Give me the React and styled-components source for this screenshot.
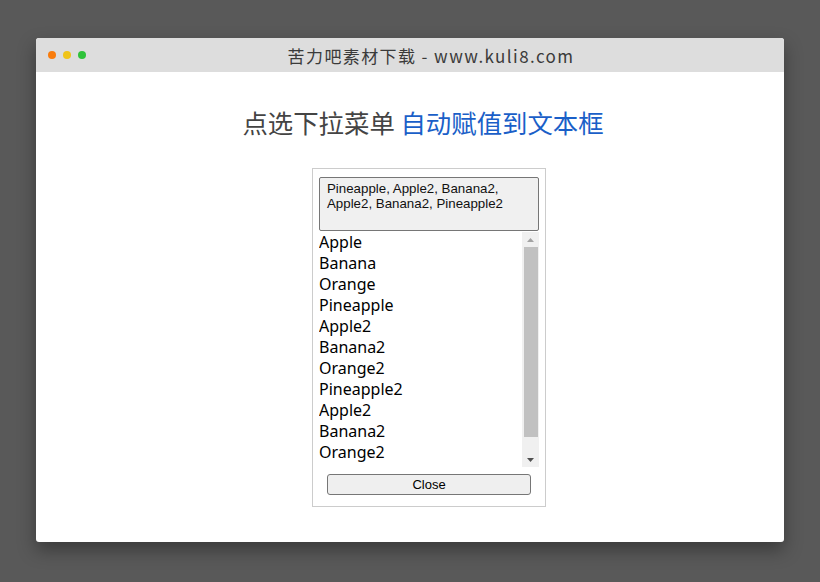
import React, { useState } from 'react'
import styled, { createGlobalStyle } from 'styled-components'

const GlobalStyle = createGlobalStyle`
  html, body {
    margin: 0;
    padding: 0;
    background: #595959;
  }
`

const Page = styled.div`
  width: 820px;
  height: 582px;
  padding: 38px 36px 0;
  box-sizing: border-box;
  background: #595959;
`

const Window = styled.div`
  width: 748px;
  height: 504px;
  background: #fff;
  border-radius: 3px;
  overflow: hidden;
  box-shadow: 0 8px 18px rgba(0, 0, 0, 0.35);
  display: flex;
  flex-direction: column;
`

const TitleBar = styled.div`
  height: 34px;
  flex: none;
  background: #dddddd;
  display: flex;
  align-items: center;
`

const Dots = styled.div`
  display: flex;
  gap: 7px;
  padding-left: 12px;
`

const Dot = styled.span`
  width: 8px;
  height: 8px;
  border-radius: 50%;
  background: ${p => p.color};
`

const TitleText = styled.div`
  flex: 1;
  text-align: center;
  padding-right: 8px;
  font-family: "Noto Sans CJK SC", "Noto Sans", sans-serif;
  font-size: 17px;
  color: #3a3a3a;
  letter-spacing: 1.4px;
`

const Content = styled.div`
  flex: 1;
  display: flex;
  flex-direction: column;
  align-items: center;
  padding: 35px 0 0 38px;
`

const Heading = styled.h1`
  margin: 0 12px 0 0;
  font-family: "Noto Sans CJK SC", "Noto Sans", sans-serif;
  font-weight: normal;
  font-size: 25.4px;
  line-height: 30px;
  color: #444;
`

const Blue = styled.span`
  color: #1a5fc8;
`

const Panel = styled.div`
  margin-top: 31px;
  width: 234px;
  height: 339px;
  box-sizing: border-box;
  border: 1px solid #cccccc;
  padding: 8px 6px 0;
  display: flex;
  flex-direction: column;
`

const Output = styled.div`
  width: 220px;
  height: 54px;
  box-sizing: border-box;
  background: #f0f0f0;
  border: 1px solid #767676;
  border-radius: 2px;
  padding: 3px 7px;
  font-family: "Liberation Sans", Arial, sans-serif;
  font-size: 13.3px;
  line-height: 15px;
  color: #111;
`

const List = styled.div`
  margin-top: 1px;
  width: 220px;
  height: 235px;
  display: flex;
`

const Items = styled.div`
  flex: 1;
  overflow: hidden;
`

const Item = styled.div`
  font-family: "Noto Sans", "Open Sans", sans-serif;
  font-size: 16px;
  line-height: 21px;
  color: #000;
  cursor: pointer;
  white-space: nowrap;
`

const Scrollbar = styled.div`
  width: 17px;
  background: #f0f0f0;
  display: flex;
  flex-direction: column;
  align-items: center;
`

const Arrow = styled.div`
  height: 15px;
  width: 100%;
  display: flex;
  align-items: center;
  justify-content: center;
`

const Thumb = styled.div`
  width: 14px;
  height: 190px;
  background: #c1c1c1;
`

const Track = styled.div`
  flex: 1;
`

const CloseButton = styled.button`
  margin: 7px auto 0;
  width: 204px;
  height: 21px;
  background: #efefef;
  border: 1px solid #767676;
  border-radius: 3px;
  font-family: "Liberation Sans", Arial, sans-serif;
  font-size: 13px;
  color: #000;
  padding: 0;
`

const fruits = ['Apple', 'Banana', 'Orange', 'Pineapple', 'Apple2', 'Banana2', 'Orange2', 'Pineapple2',
  'Apple2', 'Banana2', 'Orange2', 'Pineapple2']

export default function App() {
  const [picked, setPicked] = useState(['Pineapple', 'Apple2', 'Banana2', 'Apple2', 'Banana2', 'Pineapple2'])

  return (
    <>
      <GlobalStyle />
      <Page>
        <Window>
          <TitleBar>
            <Dots>
              <Dot color="#f97c0c" />
              <Dot color="#f0c419" />
              <Dot color="#2ec23a" />
            </Dots>
            <TitleText>苦力吧素材下载 - www.kuli8.com</TitleText>
          </TitleBar>
          <Content>
            <Heading>点选下拉菜单 <Blue>自动赋值到文本框</Blue></Heading>
            <Panel>
              <Output>{picked.join(', ')}</Output>
              <List>
                <Items>
                  {fruits.map((f, i) => (
                    <Item key={i} onClick={() => setPicked([...picked, f])}>{f}</Item>
                  ))}
                </Items>
                <Scrollbar>
                  <Arrow>
                    <svg width="7" height="4" viewBox="0 0 7 4"><path d="M0 4 L3.5 0 L7 4 Z" fill="#a3a3a3" /></svg>
                  </Arrow>
                  <Thumb />
                  <Track />
                  <Arrow>
                    <svg width="7" height="4" viewBox="0 0 7 4"><path d="M0 0 L3.5 4 L7 0 Z" fill="#505050" /></svg>
                  </Arrow>
                </Scrollbar>
              </List>
              <CloseButton>Close</CloseButton>
            </Panel>
          </Content>
        </Window>
      </Page>
    </>
  )
}
